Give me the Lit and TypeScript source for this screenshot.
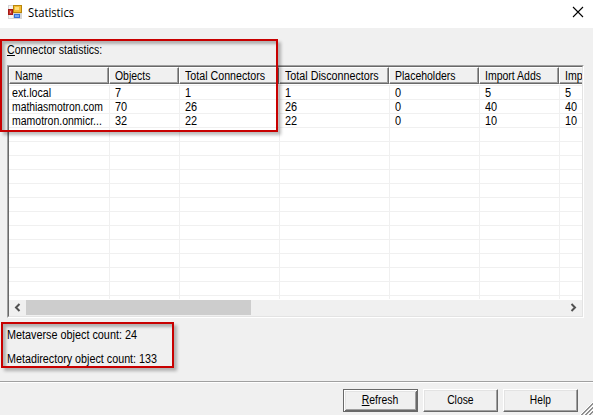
import { LitElement, html, css, svg } from "lit";
import { customElement } from "lit/decorators.js";
import { styleMap } from "lit/directives/style-map.js";

const columns = [
  { title: "Name", fit: 0.86, cells: ["ext.local", "mathiasmotron.com", "mamotron.onmicr..."] },
  { title: "Objects", fit: 0.87, cells: ["7", "70", "32"] },
  { title: "Total Connectors", fit: 0.89, cells: ["1", "26", "22"] },
  { title: "Total Disconnectors", fit: 0.895, cells: ["1", "26", "22"] },
  { title: "Placeholders", fit: 0.873, cells: ["0", "0", "0"] },
  { title: "Import Adds", fit: 0.875, cells: ["5", "40", "10"] },
  { title: "Imp", fit: 0.88, cells: ["5", "40", "10"] },
];
const nameFit = [0.89, 0.863, 0.875];
const rows = Array.from({ length: 16 }, (_, i) => i);

// A label condensed horizontally to the given ratio.
const label = (content: unknown, fit = 0.91) =>
  html`<span class="t" style=${styleMap({ "--fit": String(fit) })}>${content}</span>`;

@customElement("app-root")
export class AppRoot extends LitElement {
  static styles = css`
    :host {
      display: flex;
      flex-direction: column;
      position: relative;
      width: 593px;
      height: 415px;
      overflow: hidden;
      box-sizing: border-box;
      background: #f0f0f0;
      color: #000;
      font: 12px/14px "Liberation Sans", Arial, sans-serif;
    }
    * { box-sizing: border-box; }
    .t { display: inline-block; white-space: pre; transform: scaleX(var(--fit)); transform-origin: 0 50%; }
    .title { display: flex; height: 28px; flex: none; background: #fff; align-items: center; padding: 0 9px 4px 8px; }
    .title svg { flex: none; }
    .name { flex: 1; padding-left: 6px; font: 12px/16px "Open Sans", "Noto Sans", sans-serif; padding-top: 2px; }
    .main { flex: 1; padding: 15px 9px 0 7px; }
    .label { height: 22px; line-height: 14px; }
    u { text-decoration: none; border-bottom: 1px solid #000; display: inline-block; height: 13px; line-height: 14px; }
    .list {
      height: 253px;
      border: 1px solid;
      border-color: #a0a0a0 #fff #fff #a0a0a0;
    }
    .inner {
      height: 251px;
      border: 1px solid;
      border-color: #696969 #e3e3e3 #e3e3e3 #696969;
      background: #fff;
      display: flex;
      flex-direction: column;
    }
    .grid { display: grid; grid-template-columns: 100px 70px 100px 110px 90px 80px 23px; overflow: hidden; flex: none; }
    .h {
      height: 17px;
      background: #f0f0f0;
      border: 1px solid;
      border-color: #fff #696969 #696969 #fff;
      box-shadow: inset -1px -1px #a0a0a0;
      padding-left: 5px;
      line-height: 17px;
      overflow: hidden;
      white-space: nowrap;
    }
    .h:last-child { border-right: 0; box-shadow: inset 0 -1px #a0a0a0; }
    .body { height: 215px; padding-top: 1px; }
    .c { height: 14px; line-height: 15px; border-top: 1px solid #f0f0f0; border-left: 1px solid #f0f0f0; padding-left: 5px; white-space: nowrap; }
    .c.first { border-left: 0; padding-left: 3px; }
    .scroll { margin-top: auto; height: 16px; background: #f0f0f0; display: flex; justify-content: space-between; }
    .scroll svg { width: 17px; height: 15px; flex: none; }
    .thumb { width: 225px; height: 15px; background: #cdcdcd; margin-right: auto; }
    .counts { padding-top: 10px; display: flex; flex-direction: column; gap: 10px; align-items: flex-start; }
    .foot { height: 34px; flex: none; border-top: 1px solid #a0a0a0; box-shadow: inset 0 1px #fff; display: flex; gap: 5px; justify-content: flex-end; padding: 7px 15px 0 0; }
    button {
      font: inherit; color: inherit; width: 75px; height: 23px; padding: 0 0 1px; background: #f0f0f0; border: 1px solid;
      border-color: #fff #696969 #696969 #fff; border-radius: 0;
      box-shadow: inset -1px -1px #a0a0a0, inset 1px 1px #e3e3e3;
      display: flex; align-items: center; justify-content: center;
    }
    button .t { transform-origin: 50% 50%; }
    button.default { border-color: #696969; box-shadow: inset 1px 1px #fff, inset -1px -1px #696969, inset 2px 2px #e3e3e3, inset -2px -2px #a0a0a0; }
    .mark { position: absolute; border: 2px solid #c80000; box-shadow: 3px 3px 3px #0004, inset 3px 3px 3px #0004; pointer-events: none; }
    .m1 { left: 0; top: 39px; width: 278px; height: 93px; }
    .m2 { left: 1px; top: 322px; width: 173px; height: 46px; }
    .grip { position: absolute; right: 0; bottom: 0; }
  `;

  render() {
    return html`
      <div class="title">
        <svg width="14" height="14" viewBox="0 0 14 14">
          <rect width="14" height="14" fill="#d5d5d5" />
          <rect x="1" y="1" width="4" height="3" fill="#f4f4f4" />
          <rect x="1" y="10" width="4" height="3" fill="#f4f4f4" />
          <rect x="0" y="4" width="5" height="6" fill="#a51b16" />
          <rect x="1" y="5" width="3" height="4" fill="#c7332b" />
          <rect x="2" y="6" width="1" height="2" fill="#ed9a8c" />
          <rect x="5" y="0" width="9" height="8" fill="#b8860b" />
          <rect x="6" y="1" width="7" height="6" fill="#f5bc32" />
          <rect x="7" y="2" width="4" height="3" fill="#ffdf7a" />
          <rect x="6" y="9" width="6" height="4" fill="#326fd8" />
          <rect x="7" y="10" width="4" height="2" fill="#75a9f5" />
        </svg>
        <div class="name">${label("Statistics", 0.935)}</div>
        <svg width="12" height="12" viewBox="0 0 12 12"><path d="M1 1 11 11M11 1 1 11" stroke="#000" stroke-width="1.1" /></svg>
      </div>
      <div class="main">
        <div class="label">${label(html`<u>C</u>onnector statistics:`, 0.882)}</div>
        <div class="list"><div class="inner">
          <div class="grid">${columns.map((c) => html`<div class="h">${label(c.title, c.fit)}</div>`)}</div>
          <div class="grid body">
            ${rows.map((r) => columns.map((c, i) => html`<div class="c ${i ? "" : "first"}">${label(c.cells[r] ?? "", i ? 0.91 : nameFit[r] ?? 0.88)}</div>`))}
          </div>
          <div class="scroll">
            <svg viewBox="0 0 17 15"><path d="M10.5 4 7 7.5 10.5 11" fill="none" stroke="#505050" stroke-width="2" /></svg>
            <div class="thumb"></div>
            <svg viewBox="0 0 17 15"><path d="M6.5 4 10 7.5 6.5 11" fill="none" stroke="#505050" stroke-width="2" /></svg>
          </div>
        </div></div>
        <div class="counts">
          ${label("Metaverse object count: 24", 0.902)}
          ${label("Metadirectory object count: 133", 0.896)}
        </div>
      </div>
      <div class="foot">
        <button class="default">${label(html`<u>R</u>efresh`, 0.87)}</button>
        <button>${label("Close", 0.86)}</button>
        <button>${label("Help", 0.85)}</button>
      </div>
      <svg class="grip" width="13" height="13" viewBox="0 0 13 13">
        ${[0, 4, 8].map((o) => svg`<path d="M${o} 13 13 ${o}" stroke="#fff" /><path d="M${o + 1} 13 13 ${o + 1}M${o + 2} 13 13 ${o + 2}" stroke="#909090" />`)}
      </svg>
      <div class="mark m1"></div>
      <div class="mark m2"></div>
    `;
  }
}
